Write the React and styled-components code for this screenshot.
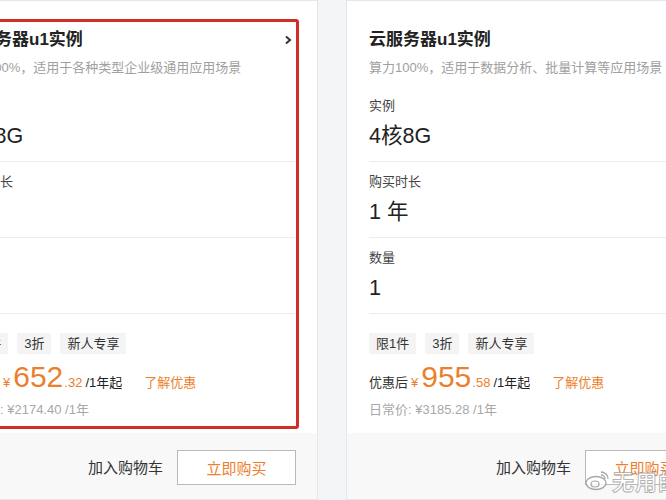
import styled, { createGlobalStyle, css } from "styled-components";

const GlobalStyle = createGlobalStyle`
  html, body {
    margin: 0;
    padding: 0;
    background: #f4f5f7;
    overflow: hidden;
  }
  body {
    font-family: "Liberation Sans", "Noto Sans CJK SC", sans-serif;
    color: #333;
  }
`;

const Page = styled.div`
  position: relative;
  display: flex;
  gap: 28px;
  margin-left: -62px;
  width: 800px;
  height: 500px;
`;

const Card = styled.div`
  flex: 0 0 380px;
  height: 500px;
  box-sizing: border-box;
  display: flex;
  flex-direction: column;
  background: #fff;
  border: 1px solid #e6e7ea;
`;

const Body = styled.div`
  position: relative;
  flex: 1;
  padding: 27px 22px 0;

  ${(p) =>
    p.$selected &&
    css`
      &::after {
        content: "";
        position: absolute;
        top: 18px;
        left: 18px;
        right: 18px;
        bottom: 4px;
        border: 3px solid #cf2f27;
        border-radius: 3px;
      }
    `}
`;

const Header = styled.div`
  display: flex;
  justify-content: space-between;
  align-items: center;
`;

const Title = styled.h3`
  margin: 0;
  font-size: 17px;
  line-height: 24px;
  font-weight: 700;
  color: #222;
`;

const Chevron = styled.svg`
  width: 8px;
  height: 10px;
  margin-right: 3px;
`;

const Sub = styled.div`
  margin: 6px 0 8px;
  font-size: 13px;
  line-height: 20px;
  color: #a0a0a0;
  white-space: nowrap;
`;

const Section = styled.div`
  padding: 10px 0 11px;
  border-bottom: 1px solid #ececec;
`;

const Label = styled.div`
  font-size: 13px;
  line-height: 20px;
  color: #444;
`;

const Value = styled.div`
  margin-top: 6px;
  font-size: 21.5px;
  line-height: 28px;
  color: #222;
`;

const Tags = styled.div`
  display: flex;
  gap: 9px;
  margin-top: 19px;
`;

const Tag = styled.span`
  padding: 0 7px;
  height: 21px;
  line-height: 21px;
  font-size: 13px;
  color: #333;
  background: #f4f4f4;
`;

const PriceRow = styled.div`
  display: flex;
  align-items: baseline;
  margin-top: 8px;
  height: 34px;
  font-size: 13px;
  white-space: nowrap;
`;

const Orange = styled.span`
  color: #ec7f2d;
  font-size: ${(p) => p.$size || 13}px;
  line-height: 1;
  margin-left: ${(p) => p.$gap || 0}px;
`;

const Unit = styled.span`
  margin-left: 3px;
  color: #222;
`;

const Origin = styled.div`
  margin-top: 5px;
  font-size: 13px;
  line-height: 18px;
  color: #a8a8a8;
`;

const Footer = styled.div`
  flex: 0 0 66px;
  display: flex;
  justify-content: flex-end;
  align-items: center;
  gap: 14px;
  padding: 0 21px;
  background: #f8f8f8;
`;

const CartLink = styled.span`
  font-size: 15px;
  color: #333;
`;

const BuyButton = styled.button`
  width: 119px;
  height: 35px;
  margin-top: 2px;
  border: 1px solid #b9b9b9;
  background: #fff;
  color: #ec7f2d;
  font-family: inherit;
  font-size: 15px;
`;

const Watermark = styled.div`
  position: absolute;
  left: 646px;
  top: 464px;
  display: flex;
  align-items: center;
  gap: 2px;
  opacity: 0.85;
  pointer-events: none;
`;

const MarkText = styled.span`
  font-size: 22px;
  font-weight: 700;
  color: #fff;
  -webkit-text-stroke: 0.8px #9a9a9a;
  letter-spacing: 1px;
`;

const products = [
  {
    sub: "算力100%，适用于各种类型企业级通用应用场景",
    price: "652",
    cents: ".32",
    origin: "日常价: ¥2174.40 /1年",
    selected: true,
  },
  {
    sub: "算力100%，适用于数据分析、批量计算等应用场景",
    price: "955",
    cents: ".58",
    origin: "日常价: ¥3185.28 /1年",
  },
];

const specs = [
  ["实例", "4核8G"],
  ["购买时长", "1 年"],
  ["数量", "1"],
];

const ProductCard = ({ item }) => (
  <Card>
    <Body $selected={item.selected}>
      <Header>
        <Title>云服务器u1实例</Title>
        <Chevron viewBox="0 0 8 10">
          <polyline points="2,1.5 6,5 2,8.5" fill="none" stroke="#333" strokeWidth="2" />
        </Chevron>
      </Header>
      <Sub>{item.sub}</Sub>
      {specs.map(([label, value]) => (
        <Section key={label}>
          <Label>{label}</Label>
          <Value>{value}</Value>
        </Section>
      ))}
      <Tags>
        <Tag>限1件</Tag>
        <Tag>3折</Tag>
        <Tag>新人专享</Tag>
      </Tags>
      <PriceRow>
        <span>优惠后</span>
        <Orange $gap={3}>¥</Orange>
        <Orange $size={30} $gap={3}>{item.price}</Orange>
        <Orange $gap={1}>{item.cents}</Orange>
        <Unit>/1年起</Unit>
        <Orange $gap={22}>了解优惠</Orange>
      </PriceRow>
      <Origin>{item.origin}</Origin>
    </Body>
    <Footer>
      <CartLink>加入购物车</CartLink>
      <BuyButton>立即购买</BuyButton>
    </Footer>
  </Card>
);

export default function App() {
  return (
    <>
      <GlobalStyle />
      <Page>
        {products.map((item) => (
          <ProductCard key={item.price} item={item} />
        ))}
        <Watermark>
          <svg width="26" height="22" viewBox="0 0 26 22">
            <ellipse cx="12" cy="14" rx="10" ry="6.5" fill="#fff" stroke="#9a9a9a" strokeWidth="1.3" />
            <ellipse cx="11" cy="15" rx="4" ry="3" fill="none" stroke="#9a9a9a" strokeWidth="1.2" />
            <path d="M17 3 a7 7 0 0 1 7 7 M17 6 a4 4 0 0 1 4 4" fill="none" stroke="#9a9a9a" strokeWidth="1.3" />
          </svg>
          <MarkText>无用的</MarkText>
        </Watermark>
      </Page>
    </>
  );
}
